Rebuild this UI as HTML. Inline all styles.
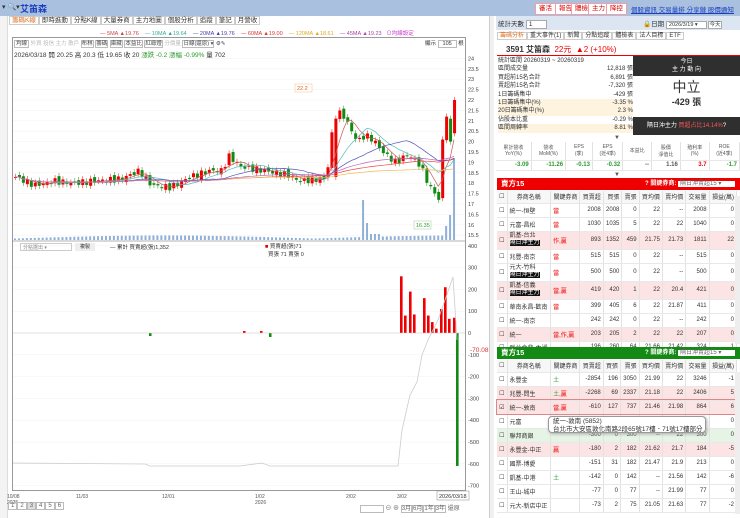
<!DOCTYPE html>
<html><head><meta charset="utf-8">
<style>
*{box-sizing:border-box;margin:0;padding:0}
body{width:740px;height:518px;overflow:hidden;background:#fff;font-family:"Liberation Sans","Noto Sans CJK TC",sans-serif;font-size:7px;color:#333;position:relative}
.a{position:absolute;white-space:nowrap}
table{border-collapse:collapse;font-size:6px}
td{border-right:1px solid #e2e2e2;border-bottom:1px solid #e8e8e8;text-align:right;padding:0 2px}
.bt{position:absolute;background:#fff;border:1px solid #f0a0a0;color:#d00;font-size:6.5px;line-height:10px;padding:0 3px}
.lk{color:#1a3fc0;text-decoration:underline;font-size:6.5px}
.g{color:#2a9a2a}.r{color:#e00}
</style></head><body>
<div class="a" style="left:0;top:0;width:740px;height:16px;background:#a9c1de"></div>
<div class="a" style="left:2px;top:3px;font-size:7px;color:#333">▾ 🔍▾</div>
<div class="a" style="left:20px;top:2px;font-size:9px;color:#1a3fc0;font-weight:bold">艾笛森</div>
<div class="bt" style="left:535px;top:3px">審活</div><div class="bt" style="left:555px;top:3px">報告</div><div class="bt" style="left:571px;top:3px">體檢</div><div class="bt" style="left:588px;top:3px">主力</div><div class="bt" style="left:606px;top:3px">降控</div>
<div class="a lk" style="left:631px;top:4px">個股資訊 交易量排 分享鏈 股價通知</div>
<div class="a" style="left:0;top:16px;width:8px;height:502px;background:#f3f3f3;border-right:1px solid #ddd"></div>
<div class="a" style="left:9px;top:15px;width:480px;height:12px;font-size:6.5px;line-height:12px">
<span style="color:#e07020;border:1px solid #ccc;padding:0 2px">籌碼K線</span><span style="border:1px solid #ccc;padding:0 2px">即時進動</span><span style="border:1px solid #ccc;padding:0 2px">分點K線</span><span style="border:1px solid #ccc;padding:0 2px">大量券商</span><span style="border:1px solid #ccc;padding:0 2px">主力地圖</span><span style="border:1px solid #ccc;padding:0 2px">個股分析</span><span style="border:1px solid #ccc;padding:0 2px">追蹤</span><span style="border:1px solid #ccc;padding:0 2px">筆記</span><span style="border:1px solid #ccc;padding:0 2px">月營收</span></div>
<div class="a" style="left:100px;top:29px;font-size:5.5px">
<span style="color:#c44">— 5MA ▲19.76</span>&nbsp;&nbsp;&nbsp;&nbsp;<span style="color:#3a9">— 10MA ▲19.64</span>&nbsp;&nbsp;&nbsp;&nbsp;<span style="color:#44a">— 20MA ▲19.76</span>&nbsp;&nbsp;&nbsp;&nbsp;<span style="color:#d33">— 60MA ▲19.00</span>&nbsp;&nbsp;&nbsp;&nbsp;<span style="color:#da2">— 120MA ▲18.61</span>&nbsp;&nbsp;&nbsp;&nbsp;<span style="color:#a4a">— 45MA ▲19.23</span>&nbsp;&nbsp;&nbsp;<span style="color:#c3c">⊙均線設定</span></div>
<div class="a" style="left:12px;top:37px;width:454px;height:454px;border:1px solid #999"></div>
<div class="a" style="left:14px;top:39px;font-size:5.5px;color:#444">
<span style="border:1px solid #bbb;padding:0 1px">均線</span> <span style="color:#bbb">外資 投信 主力 散戶</span> <span style="border:1px solid #bbb">布林</span> <span style="border:1px solid #bbb">籌碼</span> <span style="border:1px solid #bbb">庫藏</span> <span style="border:1px solid #bbb">本益比</span> <span style="border:1px solid #bbb">紅綠燈</span> <span style="color:#bbb">分價量</span> <span style="border:1px solid #bbb">日線(還原) ▾</span> ⚙✎</div>
<div class="a" style="left:425px;top:39px;font-size:5.5px">顯示 <span style="border:1px solid #bbb;padding:0 4px">105</span> 根</div>
<div class="a" style="left:14px;top:49px;font-size:6.5px">2026/03/18 開 20.25 高 20.3 低 19.65 收 20 <span class="g">漲跌 -0.2 漲幅 -0.99%</span> 量 702</div>
<svg class="a" style="left:0;top:0" width="490" height="518" id="ch"></svg>
<div class="a" style="left:20px;top:243px;width:52px;height:8px;border:1px solid #ccc;font-size:5px;color:#888;padding-left:2px">分點選出 ▾</div>
<div class="a" style="left:75px;top:243px;width:20px;height:8px;background:#eee;font-size:5px;text-align:center">複製</div>
<div class="a" style="left:110px;top:243px;font-size:5.5px">— 累計 買賣超(張)1,352</div>
<div class="a" style="left:265px;top:242px;font-size:5.5px"><span style="color:#d00">■</span> 買賣超(張)71<br>&nbsp;&nbsp;買張 71 賣張 0</div>
<div class="a" style="left:8px;top:503px;font-size:6px;color:#666">
<span style="border:1px solid #bbb;padding:0 2px">1</span><span style="border:1px solid #bbb;padding:0 2px">2</span><span style="border:1px solid #bbb;padding:0 2px;background:#ddd">3</span><span style="border:1px solid #bbb;padding:0 2px">4</span><span style="border:1px solid #bbb;padding:0 2px">5</span><span style="border:1px solid #bbb;padding:0 2px">6</span></div>
<div class="a" style="left:360px;top:503px;font-size:6px;color:#666"><span style="border:1px solid #bbb;padding:0 10px">&nbsp;</span> ⊖ ⊕ <span style="border:1px solid #bbb">3月</span><span style="border:1px solid #bbb">6月</span><span style="border:1px solid #bbb">1年</span><span style="border:1px solid #bbb">3年</span> 還原</div>
<div class="a" style="left:489px;top:16px;width:5px;height:502px;background:#f0f0f0;border-left:1px solid #ccc"></div>
<div class="a" style="left:496px;top:16px;width:244px;height:14px;background:#dce6f2"></div>
<div class="a" style="left:498px;top:18px;font-size:6.5px">統計天數 <span style="border:1px solid #aaa;background:#fff;padding:0 14px 0 2px">1</span></div>
<div class="a" style="left:643px;top:18px;font-size:6.5px">🔒日期 <span style="border:1px solid #aaa;background:#fff;padding:0 8px 0 2px;font-size:5.5px">2026/3/19 ▾</span> <span style="border:1px solid #aaa;background:#fff;font-size:5.5px">今天</span></div>
<div class="a" style="left:497px;top:31px;font-size:6px;line-height:10px"><span style="color:#e07020;border:1px solid #ccc;padding:0 2px">籌碼分析</span><span style="border:1px solid #ccc;padding:0 2px">重大事件(1)</span><span style="border:1px solid #ccc;padding:0 2px">新聞</span><span style="border:1px solid #ccc;padding:0 2px">分點追蹤</span><span style="border:1px solid #ccc;padding:0 2px">體檢表</span><span style="border:1px solid #ccc;padding:0 2px">法人目標</span><span style="border:1px solid #ccc;padding:0 2px">ETF</span></div>
<div class="a" style="left:506px;top:44px;font-size:8px;font-weight:bold">3591 艾笛森 <span style="color:#e00;font-weight:normal">&nbsp;22元 &nbsp;▲2 (+10%)</span></div>
<div class="a" style="left:497px;top:55px;width:243px;height:1px;background:#e00"></div>
<div class="a" style="left:498px;top:57px;width:135px;font-size:6px;line-height:8.4px">
<div>統計區間 20260319 ~ 20260319</div>
<div>區間成交量<span style="float:right">12,818 張</span></div>
<div>買超前15名合計<span style="float:right">6,891 張</span></div>
<div>賣超前15名合計<span style="float:right">-7,320 張</span></div>
<div>1日籌碼集中<span style="float:right">-429 張</span></div>
<div style="background:#fdf3df">1日籌碼集中(%)<span style="float:right">-3.35 %</span></div>
<div style="background:#fdf3df">20日籌碼集中(%)<span style="float:right">2.3 %</span></div>
<div>佔股本比重<span style="float:right">-0.29 %</span></div>
<div style="background:#fdf3df">區間周轉率<span style="float:right">8.81 %</span></div></div>
<div class="a" style="left:633px;top:56px;width:107px;height:79px;background:#2f2f2f;color:#fff;text-align:center">
<div style="font-size:6px;padding-top:2px;line-height:8px;height:20px">今日<br>主 力 動 向</div>
<div style="background:#fff;color:#333;height:41px;padding-top:3px"><div style="font-size:14px;line-height:17px">中立</div><div style="font-size:9px;font-weight:bold;line-height:12px">-429 張</div></div>
<div style="font-size:6px;line-height:18px">隔日沖主力 <span style="color:#f55">買超占比14.14%</span>?</div></div>
<div class="a" style="left:614px;top:135px;font-size:6px;color:#555">▼</div>
<div class="a" style="left:496px;top:142px;width:244px;font-size:5.5px;color:#555">
<table style="width:244px;font-size:5px"><tr style="height:18px;text-align:center"><td style="text-align:center">累計營收<br>YoY(%)</td><td style="text-align:center">營收<br>MoM(%)</td><td style="text-align:center">EPS<br>(季)</td><td style="text-align:center">EPS<br>(近4季)</td><td style="text-align:center">本益比</td><td style="text-align:center">股價<br>淨值比</td><td style="text-align:center">殖利率<br>(%)</td><td style="text-align:center">ROE<br>(近4季)</td></tr>
<tr style="height:10px;font-weight:bold;font-size:6px"><td class="g">-3.09</td><td class="g">-11.26</td><td class="g">-0.13</td><td class="g">-0.32</td><td>--</td><td>1.16</td><td class="r">3.7</td><td class="g">-1.7</td></tr></table></div>
<div class="a" style="left:614px;top:172px;font-size:6px;color:#555">▼</div>
<div class="a" style="left:497px;top:178px;width:243px;height:12px;background:#e00;color:#fff;font-size:7.5px;font-weight:bold;padding-left:4px;line-height:12px">賣方15<span style="position:absolute;left:148px;font-size:6px">? 關鍵券商: <span style="background:#fff;color:#666;padding:0 14px 0 2px;font-weight:normal">隔日沖賣超15 ▾</span></span></div>
<div class="a" style="left:497px;top:191px;width:243px;height:156px;overflow:hidden">
<table style="width:240px"><tr style="height:12px;text-align:center;background:#f7f7f7"><td>☐</td><td style="text-align:center">券商名稱</td><td>關鍵券商</td><td>買賣超</td><td>買張</td><td>賣張</td><td>買均價</td><td>賣均價</td><td>交易量</td><td>損益(萬)</td></tr>
<tr style="height:14px"><td>☐</td><td style="text-align:left">統一-恒壁</td><td class="r" style="text-align:left">當</td><td>2008</td><td>2008</td><td>0</td><td>22</td><td>--</td><td>2008</td><td>0</td></tr>
<tr style="height:14px"><td>☐</td><td style="text-align:left">元富-昌松</td><td class="r" style="text-align:left">當</td><td>1030</td><td>1035</td><td>5</td><td>22</td><td>22</td><td>1040</td><td>0</td></tr>
<tr style="height:18px;background:#fde4e4"><td>☐</td><td style="text-align:left;line-height:7px">凱基-台北<br><span style="background:#111;color:#fff">隔日沖主力</span></td><td class="r" style="text-align:left">作,贏</td><td>893</td><td>1352</td><td>459</td><td>21.75</td><td>21.73</td><td>1811</td><td>22</td></tr>
<tr style="height:14px"><td>☐</td><td style="text-align:left">兆豐-南京</td><td class="r" style="text-align:left">當</td><td>515</td><td>515</td><td>0</td><td>22</td><td>--</td><td>515</td><td>0</td></tr>
<tr style="height:18px"><td>☐</td><td style="text-align:left;line-height:7px">元大-竹科<br><span style="background:#111;color:#fff">隔日沖主力</span></td><td class="r" style="text-align:left">當</td><td>500</td><td>500</td><td>0</td><td>22</td><td>--</td><td>500</td><td>0</td></tr>
<tr style="height:18px;background:#fde4e4"><td>☐</td><td style="text-align:left;line-height:7px">凱基-信義<br><span style="background:#111;color:#fff">隔日沖主力</span></td><td class="r" style="text-align:left">當,贏</td><td>419</td><td>420</td><td>1</td><td>22</td><td>20.4</td><td>421</td><td>0</td></tr>
<tr style="height:14px"><td>☐</td><td style="text-align:left">華南永昌-歡南</td><td class="r" style="text-align:left">當</td><td>399</td><td>405</td><td>6</td><td>22</td><td>21.87</td><td>411</td><td>0</td></tr>
<tr style="height:14px"><td>☐</td><td style="text-align:left">統一-南京</td><td></td><td>242</td><td>242</td><td>0</td><td>22</td><td>--</td><td>242</td><td>0</td></tr>
<tr style="height:14px;background:#fde4e4"><td>☐</td><td style="text-align:left">統一</td><td class="r" style="text-align:left">當,作,贏</td><td>203</td><td>205</td><td>2</td><td>22</td><td>22</td><td>207</td><td>0</td></tr>
<tr style="height:12px"><td>☐</td><td style="text-align:left">群益金鼎-內湖</td><td></td><td>196</td><td>260</td><td>64</td><td>21.66</td><td>21.42</td><td>324</td><td>1</td></tr></table></div>
<div class="a" style="left:497px;top:347px;width:243px;height:12px;background:#138a13;color:#fff;font-size:7.5px;font-weight:bold;padding-left:4px;line-height:12px">賣方15<span style="position:absolute;left:148px;font-size:6px">? 關鍵券商: <span style="background:#fff;color:#666;padding:0 14px 0 2px;font-weight:normal">隔日沖賣超15 ▾</span></span></div>
<div class="a" style="left:497px;top:360px;width:243px">
<table style="width:240px"><tr style="height:12px;background:#f7f7f7"><td>☐</td><td style="text-align:center">券商名稱</td><td>關鍵券商</td><td>買賣超</td><td>買張</td><td>賣張</td><td>買均價</td><td>賣均價</td><td>交易量</td><td>損益(萬)</td></tr>
<tr style="height:14px"><td>☐</td><td style="text-align:left">永豐金</td><td class="g" style="text-align:left">土</td><td>-2854</td><td>196</td><td>3050</td><td>21.99</td><td>22</td><td>3246</td><td>-1</td></tr>
<tr style="height:14px;background:#fde4e4"><td>☐</td><td style="text-align:left">兆豐-問生</td><td class="r" style="text-align:left"><span class="g">土</span>,贏</td><td>-2268</td><td>69</td><td>2337</td><td>21.18</td><td>22</td><td>2406</td><td>5</td></tr>
<tr style="height:14px;background:#fde4e4;outline:1px solid #d88"><td>☑</td><td style="text-align:left">統一-敦南</td><td class="r" style="text-align:left">當,贏</td><td>-610</td><td>127</td><td>737</td><td>21.46</td><td>21.98</td><td>864</td><td>6</td></tr>
<tr style="height:14px"><td>☐</td><td style="text-align:left">元富</td><td></td><td>-567</td><td>2</td><td>569</td><td>21.7</td><td>22</td><td>571</td><td>0</td></tr>
<tr style="height:14px;background:#e6f4e6"><td>☐</td><td style="text-align:left">聯邦商銀</td><td></td><td>-300</td><td>0</td><td>300</td><td>--</td><td>22</td><td>300</td><td>0</td></tr>
<tr style="height:14px;background:#fde4e4"><td>☐</td><td style="text-align:left">永豐金-中正</td><td class="r" style="text-align:left">贏</td><td>-180</td><td>2</td><td>182</td><td>21.62</td><td>21.7</td><td>184</td><td>-5</td></tr>
<tr style="height:14px"><td>☐</td><td style="text-align:left">國票-博愛</td><td></td><td>-151</td><td>31</td><td>182</td><td>21.47</td><td>21.9</td><td>213</td><td>0</td></tr>
<tr style="height:14px"><td>☐</td><td style="text-align:left">凱基-中港</td><td class="g" style="text-align:left">土</td><td>-142</td><td>0</td><td>142</td><td>--</td><td>21.56</td><td>142</td><td>-6</td></tr>
<tr style="height:14px"><td>☐</td><td style="text-align:left">王山-城中</td><td></td><td>-77</td><td>0</td><td>77</td><td>--</td><td>21.99</td><td>77</td><td>0</td></tr>
<tr style="height:14px"><td>☐</td><td style="text-align:left">元大-新店中正</td><td></td><td>-73</td><td>2</td><td>75</td><td>21.05</td><td>21.63</td><td>77</td><td>-2</td></tr></table></div>
<div class="a" style="left:548px;top:416px;width:158px;height:17px;background:#fff;border:1px solid #999;border-radius:4px;box-shadow:1px 1px 3px #aaa;font-size:6.5px;padding:1px 4px;line-height:7.5px">統一-敦南 (5852)<br>台北市大安區敦化南路2段65號17樓．71號17樓部分</div>
<div class="a" style="left:735px;top:196px;width:5px;height:148px;background:#eee"></div>
<div class="a" style="left:735px;top:372px;width:5px;height:142px;background:#eee"></div>
<script>
var s=document.getElementById('ch'),h='';
function Y(p){return 100+(22-p)*20.8}
var ps=[24,23.5,23,22.5,22,21.5,21,20.5,20,19.5,19,18.5,18,17.5,17,16.5,16,15.5];
ps.forEach(function(p){h+='<text x="468" y="'+(Y(p)+2)+'" font-size="5.5" fill="#444">'+p+'</text><line x1="13" x2="465" y1="'+Y(p)+'" y2="'+Y(p)+'" stroke="#f2f2f2" stroke-width="0.5"/>';});
function V(v){return 333-v*0.218}
[400,300,200,100,0,-100,-200,-300,-400,-500,-600,-700].forEach(function(v){h+='<text x="468" y="'+(V(v)+2)+'" font-size="5.5" fill="#444">'+v+'</text><line x1="13" x2="465" y1="'+V(v)+'" y2="'+V(v)+'" stroke="#f0f0f0" stroke-width="0.5"/>';});
h+='<line x1="13" x2="465" y1="241" y2="241" stroke="#999" stroke-width="0.7"/>';
var K=[[0,18.3],[5,17.9],[10,18.1],[15,18.0],[20,18.1],[27,18.2],[32,18.6],[35,17.9],[40,17.8],[45,18.3],[50,18.6],[53,18.6],[55,19.3],[58,18.8],[64,18.6],[70,18.4],[73,18.1],[78,18.2],[80,18.2],[82,21.2],[84,21.4],[86,20.7],[88,20.0],[90,20.3],[92,20.1],[95,19.4],[98,19.0],[101,19.4],[104,18.9],[107,17.7],[110,17.2],[112,17.1],[114,18.0]];
function P(i){for(var k=0;k<K.length-1;k++){if(i<=K[k+1][0]){var t=(i-K[k][0])/(K[k+1][0]-K[k][0]);return K[k][1]+t*(K[k+1][1]-K[k][1]);}}return 18}
var n=112,dx=(457-14)/n,cl=[];
for(var i=0;i<n;i++){cl.push(P(i*114/n)+Math.sin(i*2.7)*0.15);}
cl[n-5]=17.2;cl[n-4]=20.1;cl[n-3]=21.2;cl[n-2]=20;cl[n-1]=22;
for(var i=0;i<n;i++){var x=14+i*dx,c=cl[i],o=i?cl[i-1]+Math.sin(i*1.3)*0.1:c;if(i==n-1)o=20.4;if(i==81)o=18.3;
var up=c>=o,col=up?'#e00':'#118a11',t=Math.max(o,c),b=Math.min(o,c);
h+='<line x1="'+(x+1.5)+'" x2="'+(x+1.5)+'" y1="'+Y(t+0.15)+'" y2="'+Y(b-0.15)+'" stroke="'+col+'" stroke-width="0.5"/><rect x="'+x+'" y="'+Y(t)+'" width="3" height="'+Math.max(1,Y(b)-Y(t))+'" fill="'+col+'"/>';
var vv=1.5+Math.abs(Math.sin(i*3.1))*3;if(i==88)vv=40;if(i==89)vv=17;if(i==109)vv=14;if(i==110)vv=25;if(i==111)vv=82;if(i>89&&i<93)vv=6;
h+='<rect x="'+x+'" y="'+(240-vv)+'" width="2" height="'+vv+'" fill="#8fb0d8"/>';}
function ma(m,col){var d='';for(var i=0;i<n;i++){var a=0,c=0;for(var j=Math.max(0,i-m+1);j<=i;j++){a+=cl[j];c++}d+=(i?'L':'M')+(15+i*dx).toFixed(1)+' '+Y(a/c).toFixed(1);}h+='<path d="'+d+'" fill="none" stroke="'+col+'" stroke-width="0.7"/>';}
ma(5,'#c55');ma(10,'#5bb');ma(20,'#55b');ma(60,'#e44');ma(120,'#eb5');ma(45,'#b6b');
h+='<rect x="295" y="84" width="17" height="8" fill="#fff" stroke="#f0c080" stroke-width="0.5"/><text x="297" y="90" font-size="5.5" fill="#e06020">22.2</text>';
h+='<rect x="414" y="221" width="17" height="8" fill="#fff" stroke="#9c9" stroke-width="0.5"/><text x="416" y="227" font-size="5.5" fill="#393">16.35</text>';
var bars=[[400,260],[404,80],[409,190],[413,85],[423,160],[427,80],[431,50],[435,20],[440,110],[444,210],[448,65],[453,70]];
bars.forEach(function(b){h+='<rect x="'+b[0]+'" y="'+V(b[1])+'" width="2.6" height="'+(V(0)-V(b[1]))+'" fill="#e00"/>';});
h+='<rect x="456" y="'+V(0)+'" width="2.6" height="'+(V(-610)-V(0))+'" fill="#118a11"/><rect x="149" y="333" width="2.5" height="3" fill="#118a11"/><rect x="243" y="331" width="2.5" height="2" fill="#e00"/><rect x="260" y="331" width="2.5" height="2" fill="#e00"/><rect x="269" y="333" width="2.5" height="4" fill="#118a11"/>';
h+='<line x1="13" x2="465" y1="333" y2="333" stroke="#ccc" stroke-width="0.6"/>';
h+='<path d="M13 463 L145 464 L150 466 L240 466 L262 463 L270 466 L398 466 L402 430 L410 395 L417 382 L422 355 L428 340 L438 320 L445 300 L453 277 L457 340" fill="none" stroke="#ccc" stroke-width="0.8"/>';
h+='<text x="470" y="352" font-size="6.5" fill="#d33">-70.08</text>';
[[7,'10/08'],[76,'11/03'],[162,'12/01'],[255,'1/02'],[346,'2/02'],[397,'3/02']].forEach(function(l){h+='<text x="'+l[0]+'" y="498" font-size="5" fill="#555">'+l[1]+'</text>';});
h+='<text x="7" y="504" font-size="5" fill="#555">2025</text><text x="255" y="504" font-size="5" fill="#555">2026</text>';
h+='<rect x="437" y="491" width="32" height="9" fill="#fff" stroke="#888" stroke-width="0.5"/><text x="439" y="498" font-size="5.5" fill="#333">2026/03/18</text>';
s.innerHTML=h;
</script>
</body></html>
